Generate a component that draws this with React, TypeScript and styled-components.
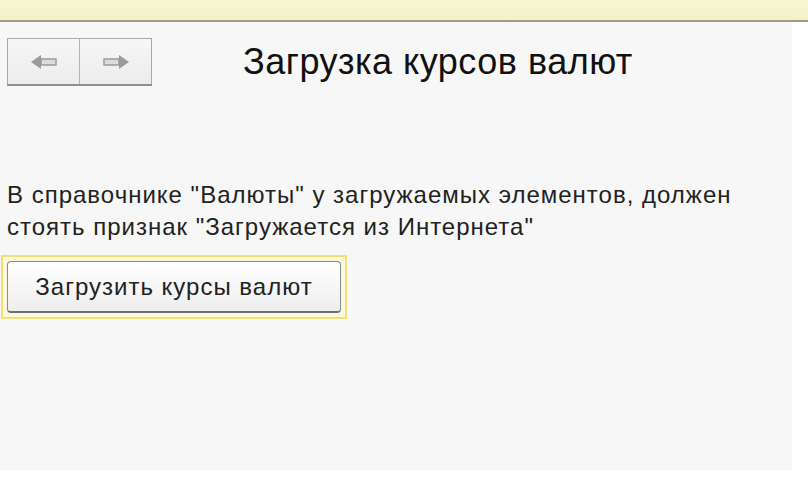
import React from "react";
import styled, { createGlobalStyle } from "styled-components";

const Global = createGlobalStyle`
  html, body { margin: 0; padding: 0; background: #ffffff; }
  body { font-family: "Liberation Sans", Arial, sans-serif; color: #1a1a1a; }
`;

const Page = styled.div`
  width: 808px;
  height: 480px;
  display: flex;
  flex-direction: column;
  overflow: hidden;
`;

const TopBar = styled.div`
  height: 20px;
  flex: none;
  background: linear-gradient(#f8f6d2, #f3f1c6);
  border-bottom: 2px solid #9c9b8c;
`;

const Main = styled.div`
  width: 792px;
  height: 448px;
  background: #f7f7f7;
  padding: 16px 0 0 7px;
  box-sizing: border-box;
  display: flex;
  flex-direction: column;
`;

const Header = styled.div`
  display: flex;
  align-items: center;
  gap: 91px;
`;

const NavGroup = styled.div`
  display: flex;
  width: 145px;
  height: 48px;
  box-sizing: border-box;
  border: 1px solid #a9a9a9;
  border-bottom: 2px solid #8e8e8e;
  background: #f2f2f2;
`;

const NavButton = styled.button<{ $last?: boolean }>`
  flex: 1;
  border: none;
  border-right: ${(p) => (p.$last ? "none" : "1px solid #b4b4b4")};
  background: linear-gradient(#f7f7f7, #ececec);
  display: flex;
  align-items: center;
  justify-content: center;
  padding: 0;
`;

const Title = styled.h1`
  margin: 0;
  font-size: 36px;
  letter-spacing: 0.5px;
  font-weight: normal;
  color: #111;
  font-family: "Liberation Sans", Arial, sans-serif;
`;

const Note = styled.p`
  margin: 93px 0 0 0;
  font-size: 24px;
  letter-spacing: 1px;
  line-height: 32px;
  color: #222;
`;

const FocusFrame = styled.div`
  align-self: flex-start;
  margin: 12px 0 0 -6px;
  padding: 4px;
  border: 2px solid #efe07a;
  background: #fbf9dc;
`;

const ActionButton = styled.button`
  width: 334px;
  height: 52px;
  border: 1px solid #8a8a8a;
  border-bottom: 2px solid #6e6e6e;
  border-radius: 4px;
  background: linear-gradient(#ffffff, #eeeeee);
  font-family: "Liberation Sans", Arial, sans-serif;
  font-size: 24px;
  letter-spacing: 1px;
  color: #222;
  padding: 0;
`;

const Arrow = ({ dir }: { dir: "left" | "right" }) => (
  <svg width="28" height="16" viewBox="0 0 28 16">
    <g transform={dir === "right" ? "translate(28,0) scale(-1,1)" : undefined}>
      <path d="M1 8 L11 1 L11 15 Z" fill="#9b9b9b" />
      <rect x="11" y="5" width="15" height="6" fill="#dcdcdc" stroke="#9b9b9b" strokeWidth="1.5" />
    </g>
  </svg>
);

export default function App() {
  return (
    <Page>
      <Global />
      <TopBar />
      <Main>
        <Header>
          <NavGroup>
            <NavButton aria-label="Назад">
              <Arrow dir="left" />
            </NavButton>
            <NavButton $last aria-label="Вперёд">
              <Arrow dir="right" />
            </NavButton>
          </NavGroup>
          <Title>Загрузка курсов валют</Title>
        </Header>
        <Note>
          В справочнике "Валюты" у загружаемых элементов, должен
          <br />
          стоять признак "Загружается из Интернета"
        </Note>
        <FocusFrame>
          <ActionButton>Загрузить курсы валют</ActionButton>
        </FocusFrame>
      </Main>
    </Page>
  );
}
